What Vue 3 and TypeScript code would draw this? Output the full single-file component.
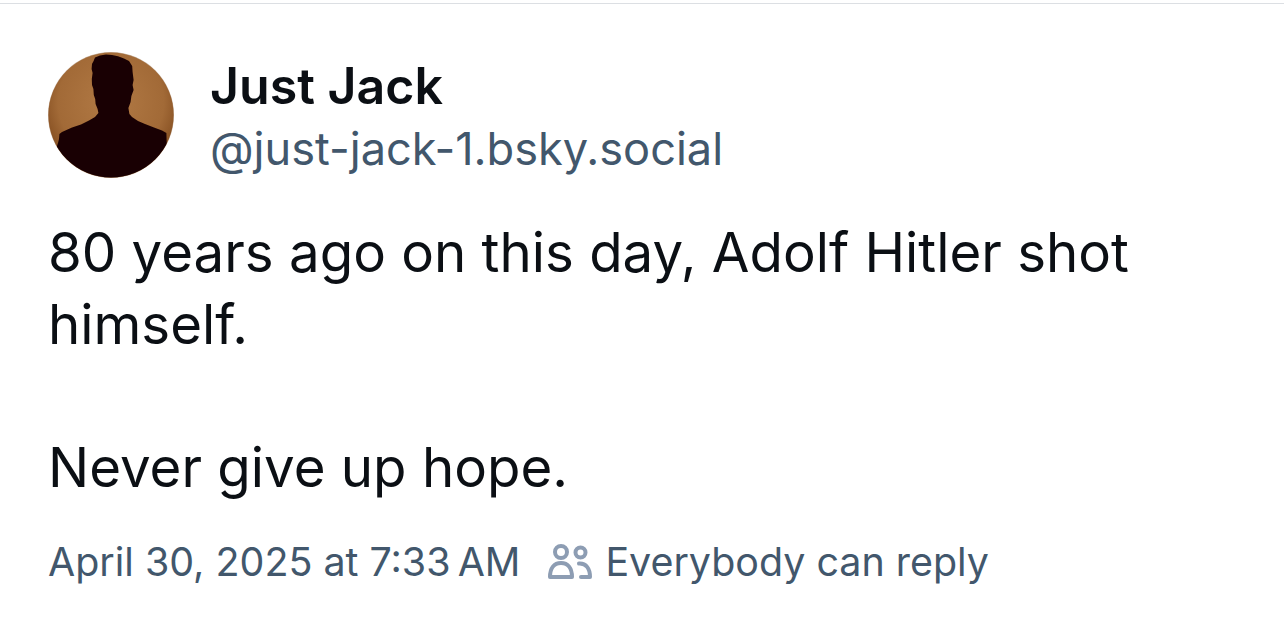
<script setup lang="ts">
const name: string = 'Just Jack'
const handle: string = '@just-jack-1.bsky.social'
</script>

<template>
  <main class="post">
    <header class="author">
      <svg class="avatar" viewBox="0 0 126 126" aria-hidden="true">
        <defs>
          <radialGradient id="glow" cx="50%" cy="40%" r="60%">
            <stop offset="0%" stop-color="#b27a45" />
            <stop offset="70%" stop-color="#a26a37" />
            <stop offset="100%" stop-color="#7e481c" />
          </radialGradient>
          <clipPath id="round"><circle cx="63" cy="63" r="62.6" /></clipPath>
        </defs>
        <circle cx="63" cy="63" r="63" fill="#c9b5a3" />
        <g clip-path="url(#round)">
          <rect width="126" height="126" fill="url(#glow)" />
          <path
            fill="#190003"
            d="M64 3 L58 2.6 L52 3.4 L47 5.6 L45.6 9 L44 12 L43.6 17 L44.6 21 L43.8 27 L44 33 L45.4 37 L45.8 43 L47.2 47 L47.6 52 L49.6 57 L50.4 61 L47 65 L41 68.4 L33 72.6 L24 75.6 L14 80 L11.4 82 L11 87 L10 91 L8 97 L4 126 L122 126 L119 96 L118.6 88 L118.4 81 L114 78.4 L106 75.6 L97 72 L90 69 L84 65 L81.4 62 L80.4 56 L82.6 50 L83.4 44 L85.6 38 L84.6 33 L85.6 28 L84.6 20 L84.2 14 L81 9 L76 6.4 L70 4.2 Z"
          />
        </g>
      </svg>
      <div class="names">
        <div class="name">{{ name }}</div>
        <div class="handle">{{ handle }}</div>
      </div>
    </header>
    <p class="body">80 years ago on this day, Adolf Hitler shot himself.<br /><br />Never give up hope.</p>
    <footer class="meta">
      <span>April 30, 2025 at 7:33&#8201;AM</span>
      <span class="reply">
        <svg class="people" viewBox="0 0 46 36" fill="none" stroke="#8d9db3" stroke-width="4" aria-hidden="true">
          <circle cx="14" cy="8" r="6" />
          <circle cx="33.5" cy="8.5" r="5" />
          <path d="M3 33 C3 24 7 19 14 19 C21 19 25 24 25 33 Z" stroke-linejoin="round" />
          <path d="M32 19.5 C39 19 43 24.5 43 33 L34 33" stroke-linecap="round" stroke-linejoin="round" />
        </svg>
        Everybody can reply
      </span>
    </footer>
  </main>
</template>

<style>
html, body { margin: 0; background: #fff; }
</style>

<style scoped>
.post {
  box-sizing: border-box;
  width: 1284px;
  height: 619px;
  overflow: hidden;
  margin-top: 3px;
  border-top: 1px solid #dcdfe3;
  padding: 48px 48px 0;
  font-family: Inter, "Liberation Sans", sans-serif;
  color: #0b0f14;
}
.author { display: flex; align-items: flex-start; gap: 37px; }
.avatar { width: 126px; height: 126px; flex: none; display: block; }
.names { display: flex; flex-direction: column; margin-top: 3px; margin-left: -1px; }
.name { font-size: 50.1px; font-weight: 600; line-height: 62px; }
.handle { font-size: 45.15px; line-height: 64px; color: #42576c; }
.body { margin: 36px 0 0; font-size: 54.62px; line-height: 71.7px; width: 1180px; }
.meta { display: flex; align-items: center; gap: 28px; margin-top: 33px; font-size: 39.4px; line-height: 50px; color: #42576c; }
.reply { display: flex; align-items: center; gap: 12px; }
.people { width: 46px; height: 36px; flex: none; margin-left: -1px; }
</style>
